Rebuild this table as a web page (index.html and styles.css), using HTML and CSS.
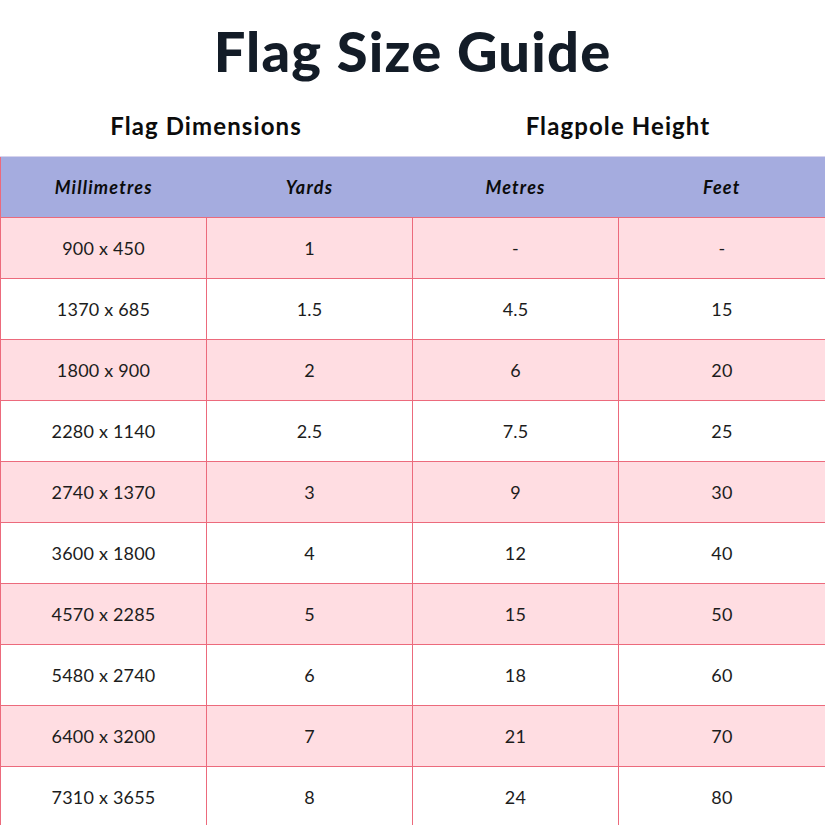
FILE: index.html
```html
<!DOCTYPE html>
<html>
<head>
<meta charset="utf-8">
<link rel="stylesheet" href="styles.css">
</head>
<body>
<h1 class="title">Flag Size Guide</h1>
<div class="groups">
  <div class="group">Flag Dimensions</div>
  <div class="group">Flagpole Height</div>
</div>
<table class="guide">
  <colgroup>
    <col class="c1"><col class="c2"><col class="c3"><col class="c4">
  </colgroup>
  <thead>
    <tr><th>Millimetres</th><th>Yards</th><th>Metres</th><th>Feet</th></tr>
  </thead>
  <tbody>
    <tr class="pink"><td>900 x 450</td><td>1</td><td>-</td><td>-</td></tr>
    <tr><td>1370 x 685</td><td>1.5</td><td>4.5</td><td>15</td></tr>
    <tr class="pink"><td>1800 x 900</td><td>2</td><td>6</td><td>20</td></tr>
    <tr><td>2280 x 1140</td><td>2.5</td><td>7.5</td><td>25</td></tr>
    <tr class="pink"><td>2740 x 1370</td><td>3</td><td>9</td><td>30</td></tr>
    <tr><td>3600 x 1800</td><td>4</td><td>12</td><td>40</td></tr>
    <tr class="pink"><td>4570 x 2285</td><td>5</td><td>15</td><td>50</td></tr>
    <tr><td>5480 x 2740</td><td>6</td><td>18</td><td>60</td></tr>
    <tr class="pink"><td>6400 x 3200</td><td>7</td><td>21</td><td>70</td></tr>
    <tr><td>7310 x 3655</td><td>8</td><td>24</td><td>80</td></tr>
  </tbody>
</table>
</body>
</html>
```
FILE: styles.css
```css
html, body {
  margin: 0;
  padding: 0;
  background: #ffffff;
}
body {
  font-family: "Lato", "Open Sans", sans-serif;
  color: #111;
  width: 825px;
  overflow: hidden;
}
.title {
  margin: 0;
  padding-top: 17px;
  font-size: 56px;
  line-height: 68px;
  font-weight: 900;
  text-align: center;
  color: #131c27;
  letter-spacing: 1.2px;
}
.groups {
  display: grid;
  grid-template-columns: 412px 412px;
  margin-top: 26px;
  margin-bottom: 15px;
}
.group {
  text-align: center;
  font-size: 24px;
  line-height: 30px;
  font-weight: 700;
  color: #0c0c0c;
  letter-spacing: 1.1px;
}
.guide {
  border-collapse: collapse;
  table-layout: fixed;
  width: 825px;
}
.guide col.c1 { width: 206px; }
.guide col.c2 { width: 206px; }
.guide col.c3 { width: 206px; }
.guide col.c4 { width: 207px; }
.guide th, .guide td {
  text-align: center;
  padding: 0;
  border: 1px solid #ec6a7c;
}
.guide th {
  background: #a5acdf;
  height: 60px;
  font-style: italic;
  font-weight: 700;
  font-size: 18px;
  color: #0c0c0c;
  letter-spacing: 1.2px;
  border-left: none;
  border-right: none;
  border-top: 1px solid #d6d3ee;
}
.guide th:first-child { border-left: 1px solid #ec6a7c; }
.guide th:last-child { border-right: 1px solid #ec6a7c; }
.guide td {
  height: 60px;
  font-size: 18px;
  color: #1c1c1c;
  letter-spacing: 0.2px;
}
.guide tr.pink td {
  background: #ffdde2;
}
```
